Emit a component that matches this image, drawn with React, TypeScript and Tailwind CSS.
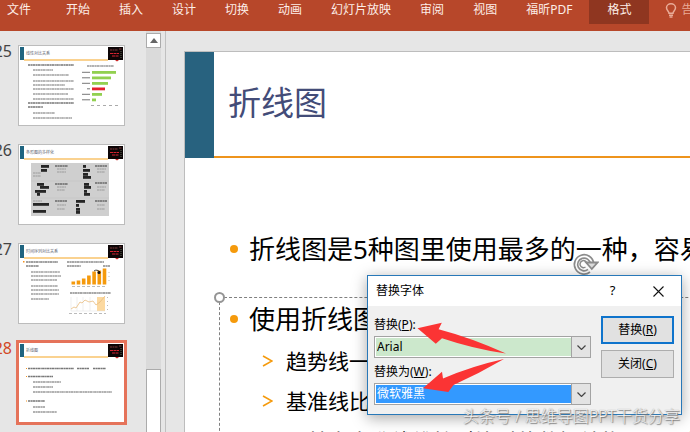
import { useState } from 'react';
import type { ReactNode } from 'react';

const tabs = ['开始', '插入', '设计', '切换', '动画', '幻灯片放映', '审阅', '视图', '福昕PDF'];

type Line = [x: number, y: number, width: number];

function TextLines({ lines, color = '#777' }: { lines: Line[]; color?: string }) {
  return (
    <g stroke={color} strokeWidth="1.5" strokeDasharray="2.6 0.4 1.4 0.3">
      {lines.map(([x, y, w]) => (
        <line key={`${x}-${y}`} x1={x} y1={y} x2={x + w} y2={y} />
      ))}
    </g>
  );
}

function SlidePreview({ title, children }: { title: string; children: ReactNode }) {
  return (
    <svg viewBox="0 0 105 79" className="block w-full bg-white">
      <rect x="1" y="1" width="4" height="13" fill="#1f6480" />
      <rect x="5" y="13.5" width="84" height="1" fill="#f5a623" />
      <text x="7" y="9" fontSize="4" fill="#5c6470">{title}</text>
      <rect x="89" y="1" width="15" height="13" fill="#0c0506" />
      <path d="M91 4h8M100 3h3" stroke="#7c3a3a" strokeWidth="1" strokeDasharray="2 0.5" />
      <path d="M91 7.5h9M93 10h7" stroke="#d42330" strokeWidth="1" strokeDasharray="3 0.5" />
      <path d="M102 5v8" stroke="#5f6b55" strokeWidth="1" strokeDasharray="1 1" />
      <path d="M96 14h4l-2 1.5z" fill="#c22" />
      {children}
    </svg>
  );
}

function BarSlide() {
  const bars = [24, 19, 16, 13, 10, 4];
  return (
    <SlidePreview title="线性对比关系">
      <TextLines color="#777" lines={[[9, 19, 46], [9, 57, 46], [9, 61, 15]]} />
      <TextLines
        color="#a0a0a0"
        lines={[[14, 24, 20], [14, 29, 36], [14, 35, 41], [14, 39, 32], [14, 43, 41], [14, 48, 35], [14, 53, 41], [14, 67, 22], [14, 72, 39]]}
      />
      <TextLines lines={[[68, 20, 27]]} color="#999" />
      {bars.map((w, i) => (
        <g key={i}>
          <rect x="73" y={25 + i * 5.5} width={w} height="2.8" fill={i === 3 ? '#e3202c' : '#92d050'} />
          <path d={`M${i === 3 ? 68 : 63} ${26.3 + i * 5.5}H71`} stroke="#777" strokeWidth="1" />
        </g>
      ))}
      <path d="M72 59.5h27" stroke="#aaa" strokeWidth="1" strokeDasharray="3 3" />
    </SlidePreview>
  );
}

function VariantsSlide() {
  const blocks = [
    [22, 20, 8], [22, 24, 6], [64, 20, 3], [64, 24, 7], [64, 28, 5], [64, 31, 8],
    [18, 38, 7], [21, 41, 9], [16, 45, 11], [18, 48, 3], [65, 38, 5], [65, 41, 7], [65, 45, 3], [65, 48, 6],
    [14, 58, 16], [14, 65, 13], [57, 55, 9], [57, 59, 3], [57, 63, 4], [57, 66, 4],
  ];
  return (
    <SlidePreview title="条形图的多样化">
      <rect x="12" y="18" width="78" height="53" fill="#cfcfcf" />
      <path d="M12 36h78M12 53h78" stroke="#bdbdbd" strokeWidth="0.5" />
      {blocks.map(([x, y, w]) => (
        <rect key={`${x}-${y}`} x={x} y={y} width={w} height="2.8" fill="#252525" />
      ))}
      <TextLines color="#6a6a6a" lines={[[36, 21, 13], [76, 21, 12], [36, 39, 13], [76, 38, 12], [36, 56, 12], [76, 56, 12]]} />
      <TextLines
        color="#adadad"
        lines={[[38, 24, 9], [38, 27, 9], [78, 24, 9], [78, 27, 8], [14, 28, 8], [14, 31, 8], [38, 42, 9], [38, 45, 8], [78, 42, 9], [78, 45, 8], [38, 60, 9], [38, 64, 8], [78, 60, 8], [78, 64, 8], [14, 56, 9]]}
      />
    </SlidePreview>
  );
}

function TimeSlide() {
  const columns = [3, 4, 6, 9, 13, 14, 16];
  return (
    <SlidePreview title="时间序列对比关系">
      <rect x="4" y="17" width="1.5" height="1.5" fill="#f5931e" />
      <TextLines color="#808080" lines={[[7, 18, 32], [7, 22, 13]]} />
      <TextLines color="#a0a0a0" lines={[[12, 28, 29], [12, 32, 30], [12, 36, 26], [12, 42, 27], [12, 46, 28], [12, 50, 28], [12, 55, 18]]} />
      <TextLines lines={[[48, 18, 37], [48, 22, 14], [84, 22, 7], [51, 49, 41]]} color="#8a8a8a" />
      {columns.map((h, i) => (
        <rect key={i} x={52.5 + i * 5.2} y={40.5 - h} width="3.6" height={h} fill="#f59a0c" />
      ))}
      <path d="M75 27c2-1.5 4-1 6 1" stroke="#111" strokeWidth="0.8" fill="none" />
      <circle cx="80" cy="28.5" r="1.5" fill="#111" />
      <path d="M53 42.5h34M50 69.5h37" stroke="#aaa" strokeWidth="0.8" strokeDasharray="3 2" />
      <path d="M90 28v12M88.500 53v15" stroke="#bbb" strokeWidth="1" strokeDasharray="1 3" />
      <rect x="78" y="53" width="8" height="14" fill="#fcd9a0" />
      <path d="M52 53v14h34M58 53v14M64 53v14M71 53v14" stroke="#ddd" strokeWidth="0.5" fill="none" />
      <path d="M52 65l3-2 2 1 4-6 2 1 3-3 4 2 4-1 3 4 4-3 5-6" stroke="#e9bd80" strokeWidth="0.8" fill="none" />
    </SlidePreview>
  );
}

function LineSlide() {
  return (
    <SlidePreview title="折线图">
      <TextLines color="#777" lines={[[9, 25.5, 46], [58, 25.5, 12], [74, 25.5, 13], [9, 33.5, 25], [9, 58, 17]]} />
      <path d="M7 25.500h1M7 33.500h1M7 58h1" stroke="#f5931e" strokeWidth="1" />
      <TextLines color="#999" lines={[[14, 39, 28], [14, 44, 20], [14, 49, 79], [14, 64, 12], [14, 69, 24]]} />
    </SlidePreview>
  );
}

function Thumbnail({ number, selected, children }: { number: number; selected?: boolean; children: ReactNode }) {
  return (
    <li className="flex gap-1.5">
      <span className={`flex w-3 shrink-0 justify-end text-base leading-3 ${selected ? 'text-[#d24726]' : 'text-[#444]'}`}>
        {number}
      </span>
      <div className={`w-[107px] border ${selected ? 'border-[#e5735a] ring-2 ring-[#e5735a]' : 'border-[#bcbcbc]'}`}>
        {children}
      </div>
    </li>
  );
}

function Ribbon() {
  return (
    <header className="flex h-[31px] shrink-0 items-start overflow-hidden bg-[#b7472a] text-xs leading-5 whitespace-nowrap text-[#fdeee8]">
      <button className="ml-[7px]">文件</button>
      <nav className="ml-[35px] flex gap-[29px]">
        {tabs.map((tab) => (
          <button key={tab}>{tab}</button>
        ))}
      </nav>
      <button className="ml-[17px] h-6 w-[60px] shrink-0 bg-[#8f3620] pb-1">格式</button>
      <div className="ml-4 flex gap-1 text-[#e9ab97]">
        <svg viewBox="0 0 12 15" className="mt-[3px] h-[15px] w-3" fill="none" stroke="currentColor" strokeWidth="1.5">
          <path d="M4 10.200C4 8.300 1.500 7.500 1.500 4.800a4.500 4 0 0 1 9 0C10.500 7.500 8 8.300 8 10.200zM4 12.200h4M4.500 14h3" />
        </svg>
        <span>告诉我</span>
      </div>
    </header>
  );
}

function ScrollBar() {
  return (
    <div className="flex w-[15px] shrink-0 flex-col bg-[#dadada] pt-0.5">
      <button aria-label="向上滚动" className="flex h-[15px] items-center justify-center border border-[#ababab] bg-white">
        <svg viewBox="0 0 8 5" className="h-[5px] w-2">
          <path d="M0 5l4-5 4 5z" fill="#666" />
        </svg>
      </button>
      <div className="grow" />
      <div className="h-[63px] border border-b-0 border-[#ababab] bg-white" />
    </div>
  );
}

function Slide() {
  return (
    <main className="relative mt-5 ml-[18px] min-w-0 grow overflow-hidden border-t border-l border-[#bdbdbd] bg-white whitespace-nowrap">
      <div className="flex h-[106px]">
        <div className="w-[29px] shrink-0 bg-[#28627f]" />
        <h1 className="grow border-b-2 border-[#ee941c] pt-7 pl-3.5 text-[33px] leading-[46px] text-[#434c78]">
          折线图
        </h1>
      </div>

      <ul className="flex flex-col gap-[30px] pt-[71px] pl-[45px] text-[26px] leading-10 text-black">
        <li className="flex items-center gap-[11px]">
          <span className="size-2 shrink-0 rounded-full bg-[#f59a0c]" />
          折线图是5种图里使用最多的一种，容易使用
        </li>
        <li>
          <div className="flex items-center gap-[11px]">
            <span className="size-2 shrink-0 rounded-full bg-[#f59a0c]" />
            使用折线图的情况
          </div>
          <ul className="mt-0.5 pl-8 text-[21px] leading-10">
            {['趋势线一', '基准线比较', '与基本水准线维护对比时的数据结构，与同行'].map((item) => (
              <li key={item} className="flex items-center gap-[13px]">
                <svg viewBox="0 0 11 12" className="h-3 w-[11px] shrink-0" fill="none" stroke="#f59a0c" strokeWidth="1.6">
                  <path d="M1 1l9 5-9 5" />
                </svg>
                {item}
              </li>
            ))}
          </ul>
        </li>
      </ul>

      {/* placeholder selection frame and its handles */}
      <div className="absolute top-[245px] left-[34px] h-[300px] w-[730px] border border-dashed border-[#808080]">
        <span className="absolute -top-1.5 -left-1.5 size-[11px] rounded-full border-2 border-[#959595] bg-white" />
        <svg viewBox="0 0 26 24" className="absolute -top-[46px] left-[353px] h-6 w-[26px]" fill="none">
          <path d="M19 11.500a8 8 0 1 0-3 7.200" stroke="#8c8c8c" strokeWidth="5" />
          <path d="M19 11.500a8 8 0 1 0-3 7.200" stroke="#fff" strokeWidth="1.6" />
          <path d="M13 10.500h11.500l-5.700 6.500z" fill="#ddd" stroke="#8c8c8c" strokeWidth="1.8" />
          <path d="M14 12a3.500 3.500 0 1 0-1.500 3" stroke="#8c8c8c" strokeWidth="1.5" />
        </svg>
      </div>
    </main>
  );
}

type FontSelectProps = {
  id: string;
  value: string;
  options: string[];
  onChange: (value: string) => void;
  active?: boolean;
};

function FontSelect({ id, value, options, onChange, active }: FontSelectProps) {
  return (
    <div className="relative h-[22px] border border-[#a3a3a3] bg-white p-px">
      <select
        id={id}
        value={value}
        onChange={(e) => onChange(e.target.value)}
        className={`block h-[18px] w-full appearance-none pl-px text-xs leading-[18px] outline-none ${active ? 'bg-[#3399ff] text-white' : 'bg-[#cce8cc] text-black'}`}
      >
        {options.map((o) => (
          <option key={o}>{o}</option>
        ))}
      </select>
      <span className="pointer-events-none absolute inset-y-0 right-0 flex w-[19px] items-center justify-center border-l border-[#a3a3a3] bg-[#e3e3e3]">
        <svg viewBox="0 0 9 5" className="h-[5px] w-[9px]" fill="none" stroke="#444" strokeWidth="1.2">
          <path d="M0.500 0.500l4 4 4-4" />
        </svg>
      </span>
    </div>
  );
}

function ReplaceFontDialog() {
  const [from, setFrom] = useState('Arial');
  const [to, setTo] = useState('微软雅黑');

  return (
    <section
      role="dialog"
      aria-labelledby="dialog-title"
      className="absolute top-[275px] left-[367px] w-[315px] border border-[#2878b8] bg-[#f0f0f0] text-xs text-black shadow-[0_3px_14px_rgba(0,0,0,0.35)]"
    >
      <div className="flex h-[30px] items-center bg-white pl-2">
        <h2 id="dialog-title" className="grow">替换字体</h2>
        <button aria-label="帮助" className="w-[45px] text-[13px]">?</button>
        <button aria-label="关闭窗口" className="flex w-[46px] justify-center">
          <svg viewBox="0 0 11 11" className="size-[11px]" stroke="#111" strokeWidth="1.1">
            <path d="M0.500 0.500l10 10M10.500 0.500l-10 10" />
          </svg>
        </button>
      </div>

      <div className="flex gap-2.5 pt-2 pr-[7px] pb-[9px] pl-1.5">
        <div className="flex grow flex-col">
          <label htmlFor="font-from" className="mt-0.5 mb-0.5 leading-[18px]">
            替换(<u>P</u>):
          </label>
          <FontSelect id="font-from" value={from} onChange={setFrom} options={['Arial', 'Calibri']} />
          <label htmlFor="font-to" className="mt-[5px] mb-0.5 leading-[18px]">
            替换为(<u>W</u>):
          </label>
          <FontSelect id="font-to" value={to} onChange={setTo} options={['微软雅黑', '宋体']} active />
        </div>
        <div className="flex w-[73px] shrink-0 flex-col gap-1.5 pt-0.5">
          <button className="h-7 border-2 border-[#0f74cc] bg-[#e1e1e1]">
            替换(<u>R</u>)
          </button>
          <button className="h-7 border border-[#adadad] bg-[#e1e1e1]">
            关闭(<u>C</u>)
          </button>
        </div>
      </div>

      <svg viewBox="0 0 92 76" className="pointer-events-none absolute top-11 left-12 h-[76px] w-[92px]" fill="#fb3434">
        <path d="M1.500 8.300L25.800 2.700 22.600 9.200Q56 18 90 33.500 58 29 26 18.200L19.800 23.700z" />
        <path d="M7 68.300L26 51.700 27 58.500Q56 46 88 39 64 53 37.500 65L32.300 72z" />
      </svg>
    </section>
  );
}

export default function App() {
  return (
    <div className="relative flex h-screen flex-col overflow-hidden bg-[#e6e6e6] font-['Noto_Sans','Noto_Sans_CJK_SC',sans-serif]">
      <Ribbon />
      <div className="flex min-h-0 grow">
        <aside className="flex w-[166px] shrink-0 overflow-hidden border-r border-[#c0c0c0]">
          <ol className="flex w-[146px] shrink-0 flex-col gap-[18px] pt-3.5">
            <Thumbnail number={25}><BarSlide /></Thumbnail>
            <Thumbnail number={26}><VariantsSlide /></Thumbnail>
            <Thumbnail number={27}><TimeSlide /></Thumbnail>
            <Thumbnail number={28} selected><LineSlide /></Thumbnail>
          </ol>
          <ScrollBar />
        </aside>
        <Slide />
      </div>
      <ReplaceFontDialog />
      <p className="pointer-events-none absolute right-2.5 bottom-1 text-base leading-6 font-light whitespace-nowrap text-[#f4f4f4] [text-shadow:1px_1px_1px_#777,0_0_1px_#888]">
        头条号 / 思维导图PPT干货分享
      </p>
    </div>
  );
}
